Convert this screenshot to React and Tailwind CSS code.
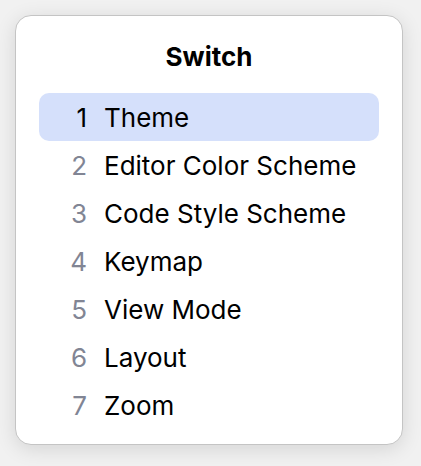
export default function App() {
  const items = [
    "Theme",
    "Editor Color Scheme",
    "Code Style Scheme",
    "Keymap",
    "View Mode",
    "Layout",
    "Zoom",
  ];
  return (
    <div
      className="w-[421px] h-[466px] bg-[#f1f1f1] p-[15px]"
      style={{ fontFamily: "Inter, 'Noto Sans', sans-serif" }}
    >
      <div className="w-[388px] h-[430px] bg-white rounded-[16px] border border-[#c4c4c4] shadow-[0_4px_20px_rgba(0,0,0,0.12)] pt-[16px] px-[23px]">
        <div className="h-[48px] flex items-center justify-center text-[26px] font-bold text-[#000]">
          Switch
        </div>
        <div className="mt-[13px] flex flex-col">
          {items.map((t, i) => (
            <div
              key={t}
              className={
                "h-[48px] flex items-center rounded-[10px] text-[26px] " +
                (i === 0 ? "bg-[#d5e0fb]" : "")
              }
            >
              <span
                className={
                  "w-[48px] text-right " +
                  (i === 0 ? "text-[#000]" : "text-[#818594]")
                }
              >
                {i + 1}
              </span>
              <span className="ml-[17px] text-[#000]">{t}</span>
            </div>
          ))}
        </div>
      </div>
    </div>
  );
}
